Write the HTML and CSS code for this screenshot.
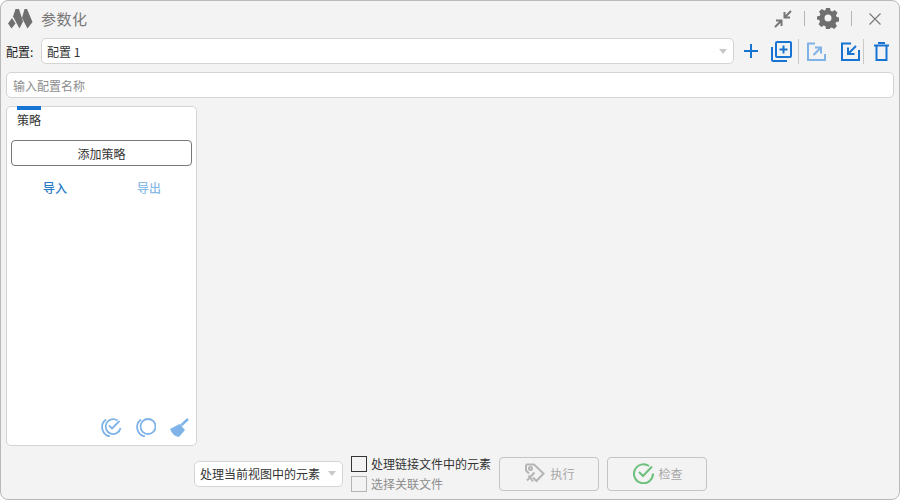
FILE: index.html
```html
<!DOCTYPE html>
<html lang="zh-CN">
<head>
<meta charset="utf-8">
<title>参数化</title>
<link rel="stylesheet" href="styles.css">
</head>
<body>
<div class="window">
  <header class="titlebar">
    <svg class="logo" width="26" height="20" viewBox="0 0 26 20"><g fill="#6f6f6f" transform="translate(1 0)"><path d="M4 9 7.500 14.500 3.500 19.500 0 14.500z"/><path d="M7.500 0 11 0 15 12.500 11.500 19.500 5 7.500z"/><path d="M16.500 0 19 0 24.500 13 19.500 19.500 14 9z"/></g></svg>
    <span class="title">参数化</span>
    <div class="win-actions">
      <svg class="shrink" width="20" height="20" viewBox="0 0 20 20" fill="none" stroke="#777" stroke-width="2"><path d="M12 8 18 2M11.500 3V8.500H17M8 12 2 18M3 11.500H8.500V17"/></svg>
      <span class="vsep"></span>
      <svg class="gear" width="22" height="22" viewBox="0 0 22 22"><path fill="#6f6f6f" fill-rule="evenodd" d="M9 1h4l.6 2.800 1.700.7L17.700 3l2.800 2.800L19 8.200l.7 1.700 2.300.6v4l-2.800.5-.7 1.700 1.500 2.400-2.800 2.800-2.400-1.500-1.700.7L13 22H9l-.5-2.800-1.700-.7L4.400 20l-2.900-2.800L3 14.800l-.7-1.700L0 12.500V9.500l2.800-.7.6-1.700L2 4.700 4.700 2l2.500 1.500 1.300-.6zM11 7.500a3.500 3.500 0 1 0 0 7 3.500 3.500 0 0 0 0-7z" transform="translate(0 -1)"/></svg>
      <span class="vsep"></span>
      <svg class="close" width="12" height="12" viewBox="0 0 12 12" fill="none" stroke="#777" stroke-width="1.100"><path d="M.5.500 11.500 11.500M11.500.500 .5 11.500"/></svg>
    </div>
  </header>

  <div class="config-row">
    <label class="config-label">配置:</label>
    <div class="select config-select"><span>配置 1</span><i class="caret"></i></div>
    <div class="tools">
      <svg class="t-add" width="16" height="16" viewBox="0 0 16 16" fill="none" stroke="#1874d2" stroke-width="2"><path d="M8 1V15M1 8H15"/></svg>
      <svg class="t-dup" width="21" height="21" viewBox="0 0 21 21" fill="none" stroke="#1874d2" stroke-width="2"><rect x="5" y="1" width="15" height="15" rx="1"/><path d="M12.500 4.500V12.500M8.500 8.500H16.500M1 6V18.500Q1 20 2.500 20H16"/></svg>
      <span class="vsep tool-sep"></span>
      <svg class="t-exp" width="19" height="19" viewBox="0 0 19 19" fill="none" stroke="#7fb2e6" stroke-width="2"><path d="M8 1.500H1V18H18V12M6.500 13 13 6.500M8 5.500H14V11.500"/></svg>
      <svg class="t-imp" width="19" height="19" viewBox="0 0 19 19" fill="none" stroke="#1874d2" stroke-width="2"><path d="M10 1.500H1V18H18V8M15 4 8 11M7 5.500V12H13.500"/></svg>
      <span class="vsep tool-sep"></span>
      <svg class="t-del" width="15" height="19" viewBox="0 0 15 19" fill="none" stroke="#1874d2" stroke-width="2"><path d="M2.500 4.500V18H12.500V4.500M0 3.500H15M4 1H11"/></svg>
    </div>
  </div>

  <div class="name-row"><input class="name-input" type="text" placeholder="输入配置名称"></div>

  <main class="content">
    <section class="panel">
      <div class="tab"><span class="tab-text">策略</span></div>
      <button class="add-btn">添加策略</button>
      <div class="io-row"><span class="io io-on">导入</span><span class="io io-off">导出</span></div>
      <div class="panel-foot">
        <svg width="22" height="20" viewBox="0 0 22 20" fill="none" stroke="#80b4e8" stroke-width="1.800"><path d="M17.500 3.500A7.500 7.500 0 1 0 20.500 11"/><path d="M6 2.500A9.500 9.500 0 0 0 10 19.500"/><path d="M9 8.500 12 11.500 19.500 4"/></svg>
        <svg width="21" height="20" viewBox="0 0 21 20" fill="none" stroke="#80b4e8" stroke-width="1.800"><circle cx="13" cy="9.500" r="7.500"/><path d="M6 2.500A9.500 9.500 0 0 0 10 19.500"/></svg>
        <svg width="20" height="20" viewBox="0 0 20 20"><path fill="#80b4e8" d="M1 12 10.500 7 16 13 10 20Q4 19.500 1 12z"/><path d="M12 8.500 19 2" stroke="#80b4e8" stroke-width="2.400"/></svg>
      </div>
    </section>
  </main>

  <footer class="footer">
    <div class="select mode-select"><span>处理当前视图中的元素</span><i class="caret"></i></div>
    <div class="checks">
      <label class="check"><i class="box"></i><span>处理链接文件中的元素</span></label>
      <label class="check check-off"><i class="box"></i><span>选择关联文件</span></label>
    </div>
    <button class="act-btn">
      <svg width="21" height="21" viewBox="0 0 21 21" fill="none" stroke="#b5b5b5" stroke-width="2"><path d="M2 1.500H10L19.500 10.500 12.500 18 9 14.500M5 10.500 2 7.500V1.500"/><circle cx="6.500" cy="5.500" r="1.500"/><path d="M10.500 9.500 3 17.500M4.500 12.500 9 18.500"/></svg>
      <span>执行</span>
    </button>
    <button class="act-btn">
      <svg class="check-icon" width="21" height="21" viewBox="0 0 21 21" fill="none" stroke="#6dbf7c" stroke-width="2"><path d="M16 3A9.500 9.500 0 1 0 20 10.500"/><path d="M6 9 10 13 19 3.500"/></svg>
      <span>检查</span>
    </button>
  </footer>
</div>
</body>
</html>
```

FILE: styles.css
```css
* { box-sizing: border-box; }
html, body { margin: 0; height: 100%; background: #fff; }
body { font-family: "Noto Sans CJK SC", "Liberation Sans", sans-serif; font-size: 12px; color: #333; }
svg { display: block; flex: none; }

.window {
  width: 900px; height: 500px;
  display: flex; flex-direction: column;
  background: #f3f3f3;
  border: 1px solid #b9b9b9;
  border-radius: 8px;
  overflow: hidden;
}

.titlebar { display: flex; align-items: center; height: 35px; padding: 0 18px 0 6px; flex: none; }
.logo { margin-right: 8px; }
.title { font-size: 15px; letter-spacing: 0.5px; color: #777; }
.win-actions { margin-left: auto; display: flex; align-items: center; }
.vsep { width: 1px; height: 15px; background: #b5b5b5; display: block; flex: none; }
.shrink { margin-right: 11px; }
.gear { margin: 0 12px; }
.close { margin-left: 17px; }

.config-row { display: flex; align-items: center; height: 28px; padding-left: 5px; flex: none; margin-top: 1px; }
.config-label { width: 35px; flex: none; color: #222; }
.select { display: flex; align-items: center; justify-content: space-between; background: #fff; border: 1px solid #d4d4d4; border-radius: 5px; color: #333; }
.config-select { width: 693px; height: 26px; padding: 0 6px 0 5px; }
.caret { width: 0; height: 0; border: 4.500px solid transparent; border-top: 5px solid #c8c8c8; border-bottom: 0; }
.tools { display: flex; align-items: center; padding-left: 9px; }
.t-add { margin-right: 12px; }
.t-dup { margin-right: 6px; }
.tool-sep { height: 25px; background: #c9c9c9; }
.t-exp { margin: 0 15px 0 8px; }
.t-imp { margin-right: 3px; }
.t-del { margin-left: 10px; }

.name-row { padding: 7px 5px 0; flex: none; }
.name-input {
  display: block; width: 888px; height: 26px; padding: 0 6px;
  background: #fff; border: 1px solid #d4d4d4; border-radius: 5px;
  font: inherit; outline: none;
}
.name-input::placeholder { color: #8d8d8d; opacity: 1; }

.content { flex: 1; padding: 8px 5px 0; min-height: 0; display: flex; }
.panel {
  width: 191px; height: 340px;
  display: flex; flex-direction: column;
  background: #fff; border: 1px solid #d4d4d4; border-radius: 5px;
  padding: 0 4px;
}
.tab { margin-left: 6px; width: 24px; height: 27px; flex: none; border-top: 4px solid #1874d2; margin-top: -1px; }
.tab-text { display: block; width: 30px; line-height: 18px; margin-top: 1px; color: #333; }
.add-btn {
  width: 181px; height: 26px; margin-top: 7px; flex: none;
  background: #fff; border: 1px solid #777; border-radius: 4px;
  font: inherit; color: #333; padding: 0;
}
.io-row { display: flex; margin-top: 13px; padding-left: 1px; font-weight: 500; }
.io { flex: none; text-align: center; line-height: 18px; }
.io-on { color: #2a7cc9; width: 86px; }
.io-off { color: #86bbe8; width: 78px; margin-left: 12px; }
.panel-foot { margin-top: auto; display: flex; justify-content: flex-end; align-items: center; gap: 13px; padding: 0 0 8px; margin-right: 3px; }

.footer { flex: none; height: 52px; display: flex; align-items: center; padding-left: 193px; }
.mode-select { width: 149px; height: 26px; padding: 0 6px 0 5px; margin-top: 1px; }
.checks { display: flex; flex-direction: column; gap: 3px; margin-left: 8px; margin-top: 1px; }
.check { display: flex; align-items: center; gap: 4px; height: 17px; color: #333; line-height: 17px; }
.box { width: 16px; height: 16px; background: #f3f3f3; border: 1px solid #333; display: block; flex: none; }
.check-off { color: #8d8d8d; }
.check-off .box { border-color: #b5b5b5; }
.act-btn {
  width: 100px; height: 34px; display: flex; align-items: center; justify-content: center; gap: 6px;
  margin-left: 8px; background: #f3f3f3; border: 1px solid #c4c4c4; border-radius: 4px;
  font: inherit; font-size: 12px; color: #a8a8a8; padding: 0; margin-top: 1px;
}
.check-icon { position: relative; left: 1px; }
```
